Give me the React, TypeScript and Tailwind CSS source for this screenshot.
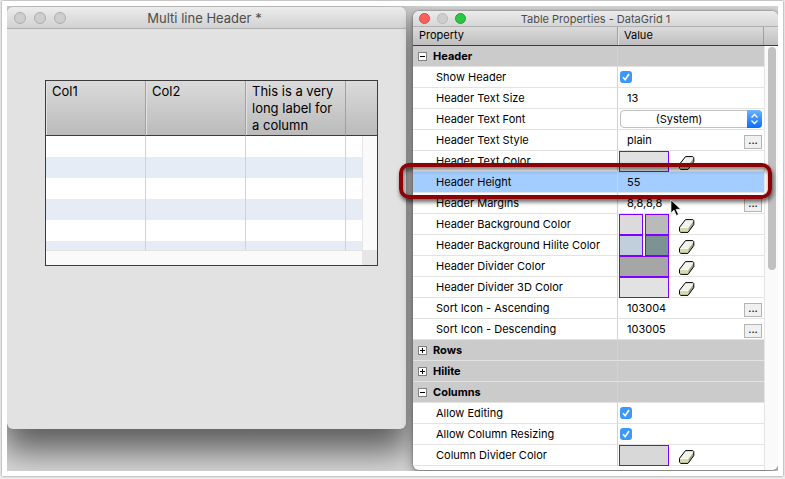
import type { ReactNode } from 'react';

type Row = {
  label: string;
  kind: 'group' | 'check' | 'text' | 'more' | 'select' | 'color';
  value?: string;
  open?: boolean;
  swatches?: string[];
};

const rows: Row[] = [
  { label: 'Header', kind: 'group', open: true },
  { label: 'Show Header', kind: 'check' },
  { label: 'Header Text Size', kind: 'text', value: '13' },
  { label: 'Header Text Font', kind: 'select', value: '(System)' },
  { label: 'Header Text Style', kind: 'more', value: 'plain' },
  { label: 'Header Text Color', kind: 'color', swatches: ['#e1e1e1'] },
  { label: 'Header Height', kind: 'text', value: '55' },
  { label: 'Header Margins', kind: 'more', value: '8,8,8,8' },
  { label: 'Header Background Color', kind: 'color', swatches: ['#dbdbdb', '#bababa'] },
  { label: 'Header Background Hilite Color', kind: 'color', swatches: ['#c1cfdd', '#7d9292'] },
  { label: 'Header Divider Color', kind: 'color', swatches: ['#a6a6a6'] },
  { label: 'Header Divider 3D Color', kind: 'color', swatches: ['#e2e2e2'] },
  { label: 'Sort Icon - Ascending', kind: 'more', value: '103004' },
  { label: 'Sort Icon - Descending', kind: 'more', value: '103005' },
  { label: 'Rows', kind: 'group' },
  { label: 'Hilite', kind: 'group' },
  { label: 'Columns', kind: 'group', open: true },
  { label: 'Allow Editing', kind: 'check' },
  { label: 'Allow Column Resizing', kind: 'check' },
  { label: 'Column Divider Color', kind: 'color', swatches: ['#d8d8d8'] },
];

const selected = 'Header Height';
const gridRows = [0, 1, 2, 3, 4, 5];

function Eraser() {
  return (
    <svg className="h-[14px] w-4" viewBox="0 0 16 14">
      <path d="M.5 8.5 6.5.7h8.3v5L9 13.4H1.8L.5 12.2z" fill="#d9d9ae" />
      <path d="M1 8.2 6.6 1h7.6L9 8.4z" fill="#f3f3ee" />
      <path d="M9.6 8.6 14.5 2v3.6L9.6 12.4z" fill="#a3a395" />
      <path d="M1.5 8.5h7.8L14.3 1.6" fill="none" stroke="#fff" strokeWidth=".8" />
      <path d="M.5 8.3 6.5.6h7.3l1 1v4L9 13.4H1.8L.5 12.2z" fill="none" stroke="#000" />
    </svg>
  );
}

function Light({ className }: { className: string }) {
  return <button type="button" aria-label="Window control" className={`rounded-full border ${className}`} />;
}

function Value({ row }: { row: Row }): ReactNode {
  if (row.kind === 'check') {
    return (
      <div className="relative ml-[2px] h-3 w-3">
        <input type="checkbox" defaultChecked aria-label={row.label} className="block h-3 w-3 appearance-none rounded-[3px] bg-[#3b99fc]" />
        <svg className="pointer-events-none absolute inset-0 h-3 w-3" viewBox="0 0 12 12" fill="none" stroke="#fff" strokeWidth="1.7">
          <path d="M3 6.3 5.2 8.7 9 3" />
        </svg>
      </div>
    );
  }
  if (row.kind === 'select') {
    return (
      <div className="relative ml-[2px] mr-[2px]">
        <select aria-label={row.label} className="block h-[18px] w-full appearance-none rounded border border-[#c0c0c0] bg-white pr-6 text-center leading-4 text-black">
          <option>{row.value}</option>
        </select>
        <svg className="pointer-events-none absolute right-0 top-0 h-[18px] w-[15px]" viewBox="0 0 15 18">
          <defs>
            <linearGradient id="arrows" x1="0" y1="0" x2="0" y2="1">
              <stop offset="0" stopColor="#6cb3fa" />
              <stop offset="1" stopColor="#0a6cff" />
            </linearGradient>
          </defs>
          <path d="M0 0h11a4 4 0 0 1 4 4v10a4 4 0 0 1-4 4H0z" fill="url(#arrows)" />
          <path d="M4.5 7.5 7.5 4.5l3 3M4.5 10.5l3 3 3-3" fill="none" stroke="#fff" strokeWidth="1.3" />
        </svg>
      </div>
    );
  }
  if (row.kind === 'color') {
    return (
      <div className="flex h-5 items-center pl-px">
        <div className="flex w-[50px] gap-[2px]">
          {row.swatches!.map(c => (
            <button key={c} type="button" aria-label={row.label} className="-mb-px h-[21px] flex-1 border border-[#8000ff]" style={{ backgroundColor: c }} />
          ))}
        </div>
        <button type="button" aria-label={`Clear ${row.label}`} className="ml-[10px] pt-1">
          <Eraser />
        </button>
      </div>
    );
  }
  if (row.kind === 'more') {
    return (
      <div className="flex items-center pl-[9px] pr-[2px]">
        <span className="flex-1">{row.value}</span>
        <button type="button" aria-label={`Edit ${row.label}`} className="mt-1 flex h-[14px] w-[18px] items-center justify-center border border-[#b4b4b4] bg-[#f0f0f0] pb-1 leading-none">
          ...
        </button>
      </div>
    );
  }
  return <span className="pl-[9px]">{row.value}</span>;
}

function PropertyRow({ row }: { row: Row }) {
  const group = row.kind === 'group';
  const bg = group ? 'bg-[#cbcbcb]' : row.label === selected ? 'bg-[#a3cdff]' : 'bg-white';
  return (
    <tr className={`h-[21px] ${bg}`}>
      <th scope="row" className="border-b border-r border-b-[#e2e2e2] border-r-[#d2d2d2] p-0 text-left">
        {group ? (
          <button type="button" className="flex items-center gap-[6px] pl-[5px] font-bold">
            <svg className="h-[9px] w-[9px]" viewBox="0 0 9 9" shapeRendering="crispEdges">
              <path d="M.5.5h8v8h-8z" fill="#fff" stroke="#808080" />
              <path d={row.open ? 'M2 4.5h5' : 'M2 4.5h5M4.5 2v5'} stroke="#000" />
            </svg>
            {row.label}
          </button>
        ) : (
          <span className="block pl-[23px] font-normal">{row.label}</span>
        )}
      </th>
      <td className="border-b border-[#e2e2e2] p-0">{!group && <Value row={row} />}</td>
    </tr>
  );
}

function DataGrid() {
  return (
    <div className="border border-[#3c3c3c] bg-[#fafafa]">
      <table className="w-full table-fixed border-separate border-spacing-0 text-[13px] leading-[17px]">
        <colgroup>
          <col className="w-[100px]" />
          <col className="w-[100px]" />
          <col className="w-[100px]" />
          <col />
        </colgroup>
        <thead>
          <tr className="h-[55px] bg-linear-to-b from-[#dbdbdb] to-[#bababa]">
            {['Col1', 'Col2', 'This is a very long label for a column'].map(c => (
              <th key={c} className="border-b border-r border-b-[#3c3c3c] border-r-[#a0a0a0] px-[6px] pb-0 pt-[2px] text-left align-top font-normal shadow-[inset_1px_0_0_#e2e2e2]">
                {c}
              </th>
            ))}
            <th className="border-b border-[#3c3c3c]" />
          </tr>
        </thead>
      </table>
      <div className="flex">
        <table className="h-[114px] flex-1 table-fixed border-separate border-spacing-0">
          <colgroup>
            <col className="w-[100px]" />
            <col className="w-[100px]" />
            <col className="w-[100px]" />
            <col />
          </colgroup>
          <tbody>
            {gridRows.map(i => (
              <tr key={i} className={`${i === 5 ? 'h-[9px]' : 'h-[21px]'} ${i % 2 ? 'bg-[#e5ecf6]' : 'bg-white'}`}>
                <td className="border-r border-[#d2d2d2] p-0" />
                <td className="border-r border-[#d2d2d2] p-0" />
                <td className="border-r border-[#d2d2d2] p-0" />
                <td className="p-0" />
              </tr>
            ))}
          </tbody>
        </table>
        <div className="w-[15px] border-l border-[#e6e6e6]" />
      </div>
      <div className="flex h-[15px]">
        <div className="flex-1 border-t border-[#e2e2e2]" />
        <div className="w-[15px] bg-[#e6e6e6]" />
      </div>
    </div>
  );
}

export default function App() {
  return (
    <div className="h-screen bg-[#ececec] pb-[3px] pl-[2px] pr-[2px] pt-px font-['Inter',sans-serif] text-[11px] leading-4 text-black">
      <main className="h-full bg-white px-[5px] pb-[5px] pt-[5px] shadow-[0_0_2px_#777]">
        <div className="flex h-full items-start gap-[7px] overflow-hidden bg-linear-to-b from-[#d4d4d4] to-[#dadada] pt-px">
          <section className="min-w-0 flex-1 rounded-md bg-[#e2e2e2] shadow-[0_0_1px_#777,0_18px_34px_4px_rgba(0,0,0,0.58)]">
            <header className="flex h-[22px] items-center rounded-t-md border-b border-[#b0b0b0] bg-linear-to-b from-[#ececec] to-[#d2d2d2] px-[7px]">
              <div className="flex w-14 gap-2">
                <Light className="h-3 w-3 border-[#adadad] bg-[#cecece]" />
                <Light className="h-3 w-3 border-[#adadad] bg-[#cecece]" />
                <Light className="h-3 w-3 border-[#adadad] bg-[#cecece]" />
              </div>
              <h1 className="flex-1 pr-[60px] text-center text-[13px] text-[#4d4d4d]">Multi line Header *</h1>
            </header>
            <div className="pb-[163px] pl-[38px] pr-7 pt-[51px]">
              <DataGrid />
            </div>
          </section>

          <div className="relative w-[365px] shrink-0 pt-1">
            <section className="overflow-hidden rounded-md bg-white shadow-[0_0_2px_#555,0_4px_12px_rgba(0,0,0,0.4)]">
              <header className="flex h-4 items-center border-b border-[#b0b0b0] bg-linear-to-b from-[#ececec] to-[#d6d6d6] px-[6px]">
                <div className="flex w-[60px] gap-[7px]">
                  <Light className="h-[11px] w-[11px] border-[#e2463f] bg-[#fc605b]" />
                  <Light className="h-[11px] w-[11px] border-[#b8b8b8] bg-[#cecece]" />
                  <Light className="h-[11px] w-[11px] border-[#17a62e] bg-[#28c940]" />
                </div>
                <h2 className="flex-1 pr-[60px] text-center text-[#4d4d4d]">Table Properties - DataGrid 1</h2>
              </header>
              <div className="flex h-[19px] border-b border-[#3c3c3c] bg-linear-to-b from-[#dbdbdb] to-[#bfbfbf]">
                <span className="w-[205px] border-r border-[#a0a0a0] pl-[6px]">Property</span>
                <span className="flex-1 border-r border-[#a0a0a0] pl-[6px] shadow-[inset_1px_0_0_#e2e2e2]">Value</span>
                <span className="w-[14px]" />
              </div>
              <div className="flex">
                <table className="mb-1 flex-1 table-fixed border-separate border-spacing-0">
                  <colgroup>
                    <col className="w-[205px]" />
                    <col />
                  </colgroup>
                  <tbody>
                    {rows.map(r => (
                      <PropertyRow key={r.label} row={r} />
                    ))}
                  </tbody>
                </table>
                <div className="w-[14px] border-l border-[#e6e6e6] bg-[#fafafa] pl-[3px] pt-px">
                  <div className="h-[223px] w-2 rounded-full bg-[#c1c1c1]" />
                </div>
              </div>
            </section>
            <div className="pointer-events-none absolute -left-[14px] right-[6px] top-[156px] h-9 rounded-[10px] border-4 border-[#8b0304] shadow-[1px_3px_4px_rgba(0,0,0,0.6),inset_1px_3px_4px_rgba(0,0,0,0.5)]" />
            <svg className="pointer-events-none absolute left-[257px] top-[192px] h-[18px] w-3" viewBox="0 0 12 18">
              <path d="M1 1v13l3-3 2.4 5.4 2-.9L6 10.3h4.6z" fill="#000" stroke="#fff" strokeWidth=".6" />
            </svg>
          </div>
        </div>
      </main>
    </div>
  );
}
